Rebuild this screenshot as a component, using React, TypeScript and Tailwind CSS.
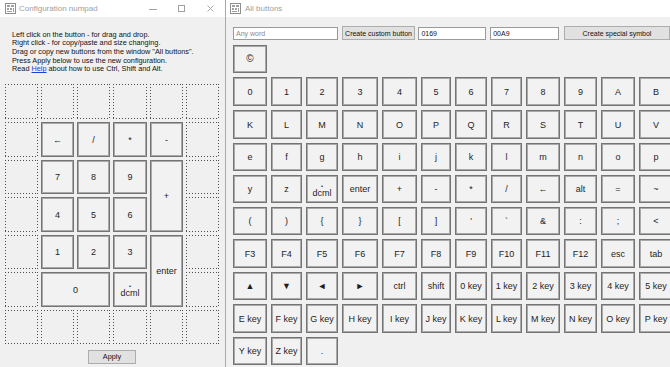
import React from "react";

const keyBase =
  "flex flex-col items-center justify-center border border-[#747474] bg-[#f2f2f2] shadow-[inset_0_0_0_1px_#a9a9a9] text-[9px] leading-[10px] text-[#1e1e1e]";

const dotted =
  "[background-image:linear-gradient(to_right,#4e4e4e_1px,transparent_1px),linear-gradient(to_right,#4e4e4e_1px,transparent_1px),linear-gradient(to_bottom,#4e4e4e_1px,transparent_1px),linear-gradient(to_bottom,#4e4e4e_1px,transparent_1px)] [background-size:3px_1px,3px_1px,1px_3px,1px_3px] [background-position:0_0,0_100%,0_0,100%_0] [background-repeat:repeat-x,repeat-x,repeat-y,repeat-y]";

function AppIcon() {
  return (
    <svg width="11" height="11" viewBox="0 0 11 11" className="shrink-0">
      <rect x="0.5" y="0.5" width="10" height="10" fill="none" stroke="#8e8e8e" />
      <rect x="2" y="2" width="3" height="2" fill="#a0a0a0" />
      <rect x="6" y="2" width="3" height="2" fill="#a0a0a0" />
      <rect x="2" y="5" width="2" height="2" fill="#a0a0a0" />
      <rect x="5" y="5" width="2" height="2" fill="#a0a0a0" />
      <rect x="8" y="5" width="1" height="4" fill="#a0a0a0" />
      <rect x="2" y="8" width="5" height="1" fill="#a0a0a0" />
    </svg>
  );
}

function Label({ text }: { text: string }) {
  if (text === "dcml") {
    return (
      <>
        <span className="leading-[7px] font-bold">.</span>
        <span className="leading-[10px]">dcml</span>
      </>
    );
  }
  return <span>{text}</span>;
}

const numpadKeys: { t: string; c: string }[] = [
  { t: "←", c: "row-start-2 col-start-2" },
  { t: "/", c: "row-start-2 col-start-3" },
  { t: "*", c: "row-start-2 col-start-4" },
  { t: "-", c: "row-start-2 col-start-5" },
  { t: "7", c: "row-start-3 col-start-2" },
  { t: "8", c: "row-start-3 col-start-3" },
  { t: "9", c: "row-start-3 col-start-4" },
  { t: "+", c: "row-start-3 col-start-5 row-span-2" },
  { t: "4", c: "row-start-4 col-start-2" },
  { t: "5", c: "row-start-4 col-start-3" },
  { t: "6", c: "row-start-4 col-start-4" },
  { t: "1", c: "row-start-5 col-start-2" },
  { t: "2", c: "row-start-5 col-start-3" },
  { t: "3", c: "row-start-5 col-start-4" },
  { t: "enter", c: "row-start-5 col-start-5 row-span-2" },
  { t: "0", c: "row-start-6 col-start-2 col-span-2" },
  { t: "dcml", c: "row-start-6 col-start-4" },
];

const rows: string[][] = [
  ["0", "1", "2", "3", "4", "5", "6", "7", "8", "9", "A", "B"],
  ["K", "L", "M", "N", "O", "P", "Q", "R", "S", "T", "U", "V"],
  ["e", "f", "g", "h", "i", "j", "k", "l", "m", "n", "o", "p"],
  ["y", "z", "dcml", "enter", "+", "-", "*", "/", "←", "alt", "=", "~"],
  ["(", ")", "{", "}", "[", "]", "'", "`", "&", ":", ";", "<"],
  ["F3", "F4", "F5", "F6", "F7", "F8", "F9", "F10", "F11", "F12", "esc", "tab"],
  ["▲", "▼", "◄", "►", "ctrl", "shift", "0 key", "1 key", "2 key", "3 key", "4 key", "5 key"],
  ["E key", "F key", "G key", "H key", "I key", "J key", "K key", "L key", "M key", "N key", "O key", "P key"],
  ["Y key", "Z key", "."],
];

const smallGlyph = new Set(["▲", "▼", "◄", "►"]);

export default function App() {
  return (
    <div className="flex w-[670px] h-[367px] overflow-hidden bg-[#f0f0f0] font-['Liberation_Sans',Arial,sans-serif] text-black">
      {/* Left window */}
      <div className="w-[226px] shrink-0 flex flex-col border-r border-[#a9a9a9] bg-[#f0f0f0]">
        <div className="h-[17px] bg-white flex items-center pl-[5px]">
          <AppIcon />
          <span className="ml-[3px] text-[8px] text-[#a0a0a0] leading-none">Configuration numpad</span>
          <div className="ml-auto flex h-full">
            <div className="w-[29px] flex items-center justify-center">
              <div className="w-[8px] h-px bg-[#a0a0a0] mt-[2px]" />
            </div>
            <div className="w-[29px] flex items-center justify-center">
              <div className="w-[7px] h-[7px] border border-[#a0a0a0]" />
            </div>
            <div className="w-[29px] flex items-center justify-center">
              <svg width="7" height="7" viewBox="0 0 7 7">
                <path d="M0.5 0.5 L6.5 6.5 M6.5 0.5 L0.5 6.5" stroke="#a0a0a0" strokeWidth="0.9" />
              </svg>
            </div>
          </div>
        </div>
        <div className="h-[67px] pt-[13.5px] pl-[12px] text-[7.3px] leading-[8.7px] text-[#111]">
          <div>Left click on the button - for drag and drop.</div>
          <div>Right click - for copy/paste and size changing.</div>
          <div>Drag or copy new buttons from the window "All buttons".</div>
          <div>Press Apply below to use the new configuration.</div>
          <div>
            Read <span className="text-[#1a3fd6] underline">Help</span> about how to use Ctrl, Shift and Alt.
          </div>
        </div>
        <div className="ml-[5px] grid grid-cols-[33px_33px_33px_34px_33px_33px] grid-rows-[35px_35px_34px_35px_34px_35px_34px] gap-[3px]">
          {numpadKeys.map((k) => (
            <div key={k.t} className={keyBase + " " + k.c}>
              <Label text={k.t} />
            </div>
          ))}
          {Array.from({ length: 22 }).map((_, i) => (
            <div key={"d" + i} className={dotted} />
          ))}
        </div>
        <div className="mt-[6px] ml-[88px] w-[48px] h-[14px] flex items-center justify-center border border-[#adadad] bg-[#e1e1e1] text-[7.3px] text-[#111]">
          Apply
        </div>
      </div>

      {/* Right window */}
      <div className="flex-1 flex flex-col min-w-0 overflow-hidden">
        <div className="h-[17px] bg-white flex items-center pl-[4px]">
          <AppIcon />
          <span className="ml-[4px] text-[8px] text-[#a0a0a0] leading-none">All buttons</span>
        </div>
        <div className="pl-[7px] pt-[9px]">
          <div className="flex items-center h-[14px] text-[7px] leading-none">
            <div className="w-[105px] h-[13px] bg-white border border-[#9a9a9a] flex items-center pl-[2px] text-[#8a8a8a]">
              Any word
            </div>
            <div className="ml-[4px] w-[74px] h-[14px] bg-[#e1e1e1] border border-[#adadad] flex items-center justify-center text-[#111]">
              Create custom button
            </div>
            <div className="ml-[3px] w-[68px] h-[13px] bg-white border border-[#9a9a9a] flex items-center pl-[2px] text-[#111]">
              0169
            </div>
            <div className="ml-[4px] w-[69px] h-[13px] bg-white border border-[#9a9a9a] flex items-center pl-[2px] text-[#111]">
              00A9
            </div>
            <div className="ml-[5px] w-[106px] shrink-0 h-[14px] bg-[#e1e1e1] border border-[#adadad] flex items-center justify-center text-[#111]">
              Create special symbol
            </div>
          </div>
          <div className={keyBase + " mt-[5px] w-[34px] h-[28px] text-[10px]"}>©</div>
          <div className="mt-[4px] grid w-max grid-cols-[34px_31px_32px_36px_35px_30px_32px_31px_34px_33px_34px_34px] grid-rows-[29px_29px_28px_28px_28px_29px_28px_29px_28px] gap-[4px]">
            {rows.map((r, ri) =>
              r.map((t, ci) => (
                <div
                  key={ri + "-" + ci}
                  className={keyBase + (smallGlyph.has(t) ? " text-[7px]" : "") + (ci === 0 ? " col-start-1" : "")}
                >
                  <Label text={t} />
                </div>
              ))
            )}
          </div>
        </div>
      </div>
    </div>
  );
}
